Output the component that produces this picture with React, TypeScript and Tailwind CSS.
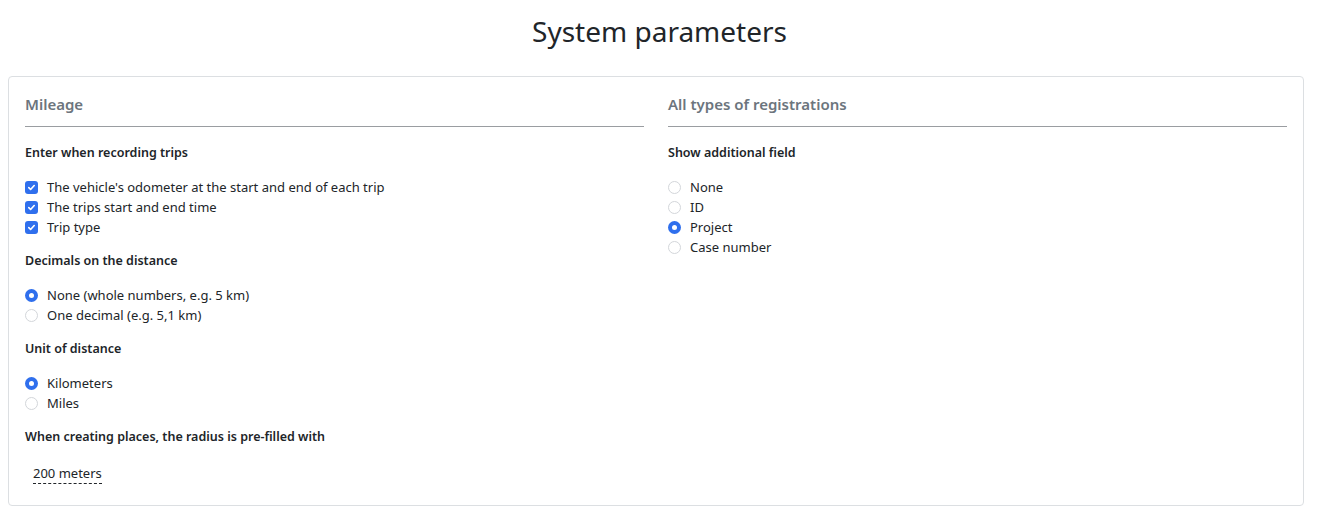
const mileage = [
  {
    label: 'Enter when recording trips',
    type: 'check',
    options: [
      { text: "The vehicle's odometer at the start and end of each trip", on: true },
      { text: 'The trips start and end time', on: true },
      { text: 'Trip type', on: true },
    ],
  },
  {
    label: 'Decimals on the distance',
    type: 'radio',
    options: [
      { text: 'None (whole numbers, e.g. 5 km)', on: true },
      { text: 'One decimal (e.g. 5,1 km)', on: false },
    ],
  },
  {
    label: 'Unit of distance',
    type: 'radio',
    options: [
      { text: 'Kilometers', on: true },
      { text: 'Miles', on: false },
    ],
  },
]

const registrations = [
  {
    label: 'Show additional field',
    type: 'radio',
    options: [
      { text: 'None', on: false },
      { text: 'ID', on: false },
      { text: 'Project', on: true },
      { text: 'Case number', on: false },
    ],
  },
]

type Group = (typeof mileage)[number]

function Box({ type, on }: { type: string; on: boolean }) {
  if (type === 'check') {
    return (
      <span className="w-[13px] h-[13px] rounded-[3px] bg-[#2f6fed] flex items-center justify-center flex-shrink-0">
        <svg width="9" height="9" viewBox="0 0 10 10" fill="none">
          <path d="M2 5.2l2 2 4-4.4" stroke="#fff" strokeWidth="1.8" strokeLinecap="round" strokeLinejoin="round" />
        </svg>
      </span>
    )
  }
  return on ? (
    <span className="w-[13px] h-[13px] rounded-full bg-[#2f6fed] flex items-center justify-center flex-shrink-0">
      <span className="w-[5px] h-[5px] rounded-full bg-white" />
    </span>
  ) : (
    <span className="w-[13px] h-[13px] rounded-full border border-[#d3d6da] bg-white flex-shrink-0" />
  )
}

function Options({ group }: { group: Group }) {
  return (
    <div className="mb-[14px]">
      <div className="h-5 leading-5 font-semibold text-[12.5px] mb-[14px]">{group.label}</div>
      {group.options.map(o => (
        <div key={o.text} className="h-5 flex items-center gap-[9px]">
          <Box type={group.type} on={o.on} />
          <span className="leading-5">{o.text}</span>
        </div>
      ))}
    </div>
  )
}

function Header({ title }: { title: string }) {
  return (
    <div className="border-b border-[#9a9da1] pb-[11px] mb-[16px]">
      <h2 className="text-[15px] leading-[22px] font-semibold text-[#6c757d]">{title}</h2>
    </div>
  )
}

export default function App() {
  return (
    <div
      className="bg-white text-[#212529] text-[13px] min-h-[523px]"
      style={{ fontFamily: '"Noto Sans", "Open Sans", sans-serif' }}
    >
      <h1 className="text-center text-[28px] leading-[40px] pt-[11px] pb-[25px] font-normal">System parameters</h1>
      <div className="pl-2 pr-[15px]">
        <div className="border border-[#dcdfe2] rounded-[4px] pt-[16px] px-4 pb-[21px] grid grid-cols-2 gap-6">
          <div>
            <Header title="Mileage" />
            {mileage.map(g => (
              <Options key={g.label} group={g} />
            ))}
            <div className="h-5 leading-5 font-semibold text-[12.5px] mb-[16px]">
              When creating places, the radius is pre-filled with
            </div>
            <div className="px-2">
              <span className="leading-5 border-b border-dashed border-[#212529] inline-block">200 meters</span>
            </div>
          </div>
          <div>
            <Header title="All types of registrations" />
            {registrations.map(g => (
              <Options key={g.label} group={g} />
            ))}
          </div>
        </div>
      </div>
    </div>
  )
}
